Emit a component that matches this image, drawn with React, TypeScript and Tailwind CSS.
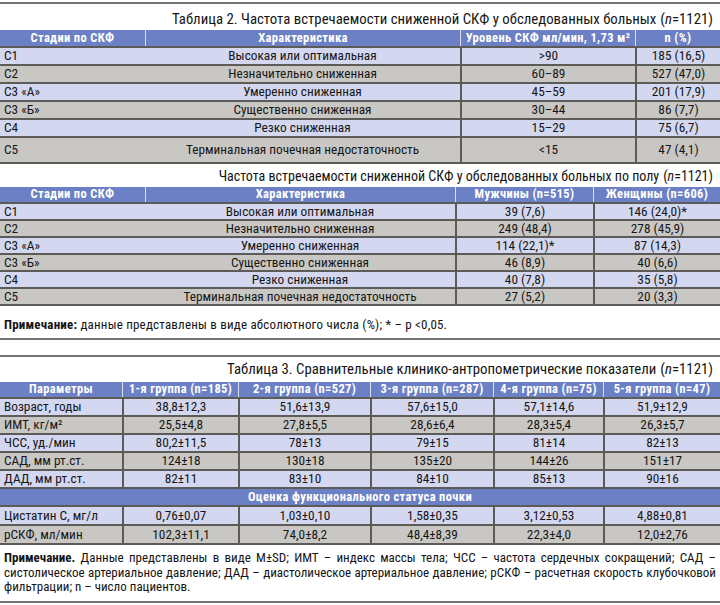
import React from "react";

const LINE = "bg-[#76736e]";
const LAV = "bg-[#d3d7ef]";
const GRAY = "bg-[#c9c7c4]";
const HEAD = "bg-[#6b80c5]";

type Cell = { text: React.ReactNode; w: number; align?: "left" | "center" };

function HeadRow({ cells, h }: { cells: Cell[]; h: number }) {
  return (
    <div className={`flex ${HEAD} border-b-2 border-[#5d5b58]`} style={{ height: h }}>
      {cells.map((c, i) => (
        <div
          key={i}
          className={`flex items-center justify-center whitespace-nowrap text-white font-bold text-[12.5px] tracking-[0.35px] ${i > 0 ? "border-l border-[#d9def3]" : ""}`}
          style={{ width: c.w }}
        >
          {c.text}
        </div>
      ))}
    </div>
  );
}

function BodyRow({
  cells,
  h,
  bg,
  seps,
}: {
  cells: Cell[];
  h: number;
  bg: string;
  seps: number[];
}) {
  return (
    <div className={`flex ${bg} border-b-2 border-[#5d5b58]`} style={{ height: h }}>
      {cells.map((c, i) => (
        <div
          key={i}
          className={`flex items-center whitespace-nowrap text-[13.3px] text-[#161616] ${c.align === "left" ? "justify-start pl-1" : "justify-center"} ${seps.includes(i) ? "border-l-2 border-[#5d5b58]" : ""}`}
          style={{ width: c.w }}
        >
          {c.text}
        </div>
      ))}
    </div>
  );
}

const N = () => (
  <>
    (<i>n</i>=1121)
  </>
);

const t1w = [145, 315, 175, 85];
const t1 = [
  ["С1", "Высокая или оптимальная", ">90", "185 (16,5)"],
  ["С2", "Незначительно сниженная", "60–89", "527 (47,0)"],
  ["С3 «А»", "Умеренно сниженная", "45–59", "201 (17,9)"],
  ["С3 «Б»", "Существенно сниженная", "30–44", "86 (7,7)"],
  ["С4", "Резко сниженная", "15–29", "75 (6,7)"],
  ["С5", "Терминальная почечная недостаточность", "<15", "47 (4,1)"],
];

const t2w = [145, 310, 138, 127];
const t2 = [
  ["С1", "Высокая или оптимальная", "39 (7,6)", "146 (24,0)*"],
  ["С2", "Незначительно сниженная", "249 (48,4)", "278 (45,9)"],
  ["С3 «А»", "Умеренно сниженная", "114 (22,1)*", "87 (14,3)"],
  ["С3 «Б»", "Существенно сниженная", "46 (8,9)", "40 (6,6)"],
  ["С4", "Резко сниженная", "40 (7,8)", "35 (5,8)"],
  ["С5", "Терминальная почечная недостаточность", "27 (5,2)", "20 (3,3)"],
];

const t3w = [122, 116, 132, 123, 110, 117];
const t3a = [
  ["Возраст, годы", "38,8±12,3", "51,6±13,9", "57,6±15,0", "57,1±14,6", "51,9±12,9"],
  ["ИМТ, кг/м²", "25,5±4,8", "27,8±5,5", "28,6±6,4", "28,3±5,4", "26,3±5,7"],
  ["ЧСС, уд./мин", "80,2±11,5", "78±13", "79±15", "81±14", "82±13"],
  ["САД, мм рт.ст.", "124±18", "130±18", "135±20", "144±26", "151±17"],
  ["ДАД, мм рт.ст.", "82±11", "83±10", "84±10", "85±13", "90±16"],
];
const t3b = [
  ["Цистатин С, мг/л", "0,76±0,07", "1,03±0,10", "1,58±0,35", "3,12±0,53", "4,88±0,81"],
  ["рСКФ, мл/мин", "102,3±11,1", "74,0±8,2", "48,4±8,39", "22,3±4,0", "12,0±2,76"],
];

function toCells(row: string[], widths: number[]): Cell[] {
  return row.map((t, i) => ({ text: t, w: widths[i], align: i === 0 ? "left" : "center" }));
}

export default function App() {
  return (
    <div className="w-[720px] h-[605px] bg-white overflow-hidden font-['Roboto_Condensed','Roboto',sans-serif] text-[#141414]">
      <div className={`mt-[2px] h-[2px] ${LINE}`} />

      <div className="h-[26px] pt-[4px] flex items-center justify-end pr-[7px] text-[14.8px] whitespace-nowrap">
        Таблица 2. Частота встречаемости сниженной СКФ у обследованных больных <span className="ml-1"><N /></span>
      </div>

      <HeadRow
        h={18}
        cells={[
          { text: "Стадии по СКФ", w: t1w[0] },
          { text: "Характеристика", w: t1w[1] },
          { text: "Уровень СКФ мл/мин, 1,73 м²", w: t1w[2] },
          { text: "n (%)", w: t1w[3] },
        ]}
      />
      {t1.map((r, i) => (
        <BodyRow
          key={i}
          h={i === 5 ? 26 : 18}
          bg={i % 2 === 0 ? LAV : GRAY}
          seps={[2, 3]}
          cells={toCells(r, t1w)}
        />
      ))}

      <div className="h-[23px] pt-[1px] flex items-center justify-end pr-[7px] text-[14px] whitespace-nowrap">
        Частота встречаемости сниженной СКФ у обследованных больных по полу <span className="ml-1"><N /></span>
      </div>

      <HeadRow
        h={17}
        cells={[
          { text: "Стадии по СКФ", w: t2w[0] },
          { text: "Характеристика", w: t2w[1] },
          { text: "Мужчины (n=515)", w: t2w[2] },
          { text: "Женщины (n=606)", w: t2w[3] },
        ]}
      />
      {t2.map((r, i) => (
        <BodyRow key={i} h={17} bg={i % 2 === 0 ? LAV : GRAY} seps={[2, 3]} cells={toCells(r, t2w)} />
      ))}

      <p className="pt-[11px] pl-1 leading-[16px] text-[13px] tracking-[0.2px] whitespace-nowrap">
        <b>Примечание:</b> данные представлены в виде абсолютного числа (%); * – p &lt;0,05.
      </p>

      <div className={`mt-[5px] h-[2px] ${LINE}`} />
      <div className={`mt-[15px] h-[2px] ${LINE}`} />

      <div className="h-[25px] flex items-center justify-end pr-[7px] text-[14.8px] whitespace-nowrap">
        Таблица 3. Сравнительные клинико-антропометрические показатели <span className="ml-1"><N /></span>
      </div>

      <HeadRow
        h={17}
        cells={[
          { text: "Параметры", w: t3w[0] },
          { text: "1-я группа (n=185)", w: t3w[1] },
          { text: "2-я группа (n=527)", w: t3w[2] },
          { text: "3-я группа (n=287)", w: t3w[3] },
          { text: "4-я группа (n=75)", w: t3w[4] },
          { text: "5-я группа (n=47)", w: t3w[5] },
        ]}
      />
      {t3a.map((r, i) => (
        <BodyRow key={i} h={18} bg={i % 2 === 0 ? LAV : GRAY} seps={[1, 2, 3, 4, 5]} cells={toCells(r, t3w)} />
      ))}
      <div className={`h-[18px] ${HEAD} border-b-2 border-[#5d5b58] flex items-center justify-center text-white font-bold text-[12.5px] tracking-[0.35px]`}>
        Оценка функционального статуса почки
      </div>
      {t3b.map((r, i) => (
        <BodyRow key={i} h={19} bg={i % 2 === 0 ? LAV : GRAY} seps={[1, 2, 3, 4, 5]} cells={toCells(r, t3w)} />
      ))}

      <div className="pt-[6px] px-1 text-[13px] leading-[14.5px]">
        <div className="text-justify [text-align-last:justify] whitespace-nowrap">
          <b>Примечание.</b> Данные представлены в виде M±SD; ИМТ – индекс массы тела; ЧСС – частота сердечных сокращений; САД –
        </div>
        <div className="text-justify [text-align-last:justify] whitespace-nowrap">
          систолическое артериальное давление; ДАД – диастолическое артериальное давление; рСКФ – расчетная скорость клубочковой
        </div>
        <div>фильтрации; n – число пациентов.</div>
      </div>

      <div className={`mt-[6px] h-[2px] ${LINE}`} />
    </div>
  );
}
